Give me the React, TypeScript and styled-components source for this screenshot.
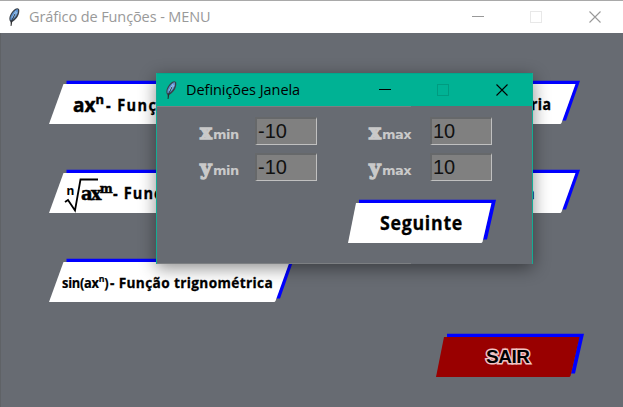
import React from 'react';
import styled, { createGlobalStyle } from 'styled-components';

const GlobalStyle = createGlobalStyle`
  * { box-sizing: border-box; }
  body { margin: 0; overflow: hidden; font-family: "Liberation Sans", Arial, sans-serif; }
`;

const Desktop = styled.div`
  position: relative;
  width: 623px;
  height: 407px;
  overflow: hidden;
  display: flex;
  flex-direction: column;
`;

const TitleBar = styled.header<{ $active?: boolean }>`
  display: flex;
  align-items: center;
  height: 33px;
  flex: none;
  padding-left: 7px;
  border-top: 1px solid ${p => (p.$active ? '#00a88c' : '#a9a9a9')};
  background: ${p => (p.$active ? '#00b294' : '#fff')};
  color: ${p => (p.$active ? '#000' : '#999')};
`;

const Title = styled.h1<{ $width: number; $spacing: number }>`
  flex: none;
  width: ${p => p.$width}px;
  margin: 0 auto 0 8px;
  font: 400 14.5px/20px "Open Sans", "Noto Sans", sans-serif;
  letter-spacing: ${p => p.$spacing}px;
  white-space: nowrap;
`;

const Controls = styled.div<{ $right: number }>`
  display: flex;
  gap: 46px;
  margin-right: ${p => p.$right}px;
  svg:last-child { margin-left: 1px; }
`;

const Surface = styled.main`
  flex: 1;
  padding: 47px 0 0 48px;
  background: #676b72;
  border-left: 1px solid #5f6266;
`;

const Menu = styled.nav`
  display: grid;
  grid-template-columns: 245px 245px;
  column-gap: 41px;
  grid-auto-rows: 45px;
  row-gap: 44px;
`;

const ExitRow = styled.div`
  display: flex;
  justify-content: flex-end;
  margin: 30px 39px 0 0;
`;

const SlantButton = styled.button<{ $w: number }>`
  position: relative;
  display: block;
  width: ${p => p.$w}px;
  height: 45px;
  padding: 0;
  border: 0;
  background: none;
  color: #000;
  text-align: left;
`;

const Backdrop = styled.svg`
  position: absolute;
  inset: 0;
  display: block;
`;

const Caption = styled.span<{ $indent: number }>`
  position: relative;
  display: flex;
  align-items: baseline;
  height: 45px;
  padding: 14px 0 0 ${p => p.$indent}px;
  white-space: nowrap;
`;

const Term = styled.span<{ $size: number; $spacing?: number; $w: number; $family?: string }>`
  flex: none;
  width: ${p => p.$w}px;
  font: 700 ${p => p.$size}px/22px ${p => p.$family ?? '"Liberation Sans"'}, sans-serif;
  letter-spacing: ${p => p.$spacing ?? 0}px;
`;

const NarrowTerm = styled(Term)`
  font-family: "Open Sans", sans-serif;
  transform: translateY(-1px) scaleX(0.91);
  transform-origin: 0 50%;
  -webkit-text-stroke: 0.3px #000;
`;

const FormulaTerm = styled(Term)`
  font-family: "Open Sans", sans-serif;
  transform: translateY(-1px) scaleX(0.92);
  transform-origin: 0 50%;
  -webkit-text-stroke: 0.2px #000;
`;

const Power = styled.sup`
  font-size: 0.68em;
  line-height: 0;
  vertical-align: 0.6em;
`;

const Radical = styled.svg`
  position: absolute;
  left: 14px;
  top: 4px;
`;

const ExitText = styled(Term)`
  transform: translateY(-1px);
  -webkit-text-stroke: 3px #f2c4c4;
  paint-order: stroke fill;
`;

const HeavyTerm = styled(Term)`
  -webkit-text-stroke: 0.5px #000;
`;

const Dialog = styled.section`
  position: absolute;
  left: 156px;
  top: 73px;
  width: 377px;
  height: 191px;
  display: flex;
  flex-direction: column;
  border: solid #14ac94;
  border-width: 0 1px;
  background: #676b72;
  box-shadow: 0 4px 16px rgba(0, 0, 0, 0.45);
`;

const Edge = styled.div`
  width: 254px;
  height: 1px;
  flex: none;
  background: #7c7f82;
`;

const Form = styled.div`
  flex: 1;
  padding: 10px 0 0 42px;
`;

const Fields = styled.div`
  display: grid;
  grid-template-columns: 56px 113px 62px 62px;
  grid-auto-rows: 28px;
  row-gap: 8px;
`;

const FieldName = styled.label`
  display: flex;
  align-items: baseline;
  padding-left: 1px;
  color: #c9c9c9;
  font: 700 13px/30px "DejaVu Sans", sans-serif;
  letter-spacing: -0.5px;
`;

const Axis = styled.b`
  width: 13px;
  font: 700 20px/30px "DejaVu Serif", serif;
  -webkit-text-stroke: 1.3px #c9c9c9;
`;

const Entry = styled.input`
  width: 62px;
  height: 28px;
  padding: 0 0 0 1px;
  border: solid;
  border-width: 2px 1px 1px 2px;
  border-color: #66686a #c0c0c0 #c0c0c0 #66686a;
  border-radius: 0;
  outline: 0;
  background: #808080;
  color: #111;
  font: 20px "Liberation Sans", Arial, sans-serif;
`;

const Submit = styled.div`
  margin: 18px 0 0 149px;
`;

const Feather = () => (
  <svg width="14" height="20" viewBox="0 0 14 20">
    <path d="M4 19L3.5 15C.5 11 4 5 8 2C10 .5 12.8 1 12.3 4C12.3 9 8.5 13 5 15Z" fill="#3a4048" />
    <path d="M3.5 13C2.5 9 7 3.5 10.5 2C12.5 5 8.5 11.5 4.5 13.5Z" fill="#5b91cf" />
    <path d="M5 11L9 4M7 10L10 5" stroke="#9cc4ec" />
    <path d="M4 19L5 13L8 7" stroke="#222" fill="none" strokeWidth=".8" />
  </svg>
);

const WindowControls = ({ ink, faint, right }: { ink: string; faint: string; right: number }) => (
  <Controls $right={right}>
    <svg width="12" height="12"><path d="M0 5.5H12" stroke={ink} /></svg>
    <svg width="12" height="12"><rect x=".5" y=".5" width="11" height="11" fill="none" stroke={faint} /></svg>
    <svg width="12" height="12"><path d="M.5.5L11.5 11.5M11.5.5L.5 11.5" stroke={ink} strokeWidth="1.1" /></svg>
  </Controls>
);

type SlantedProps = { small?: boolean; fill?: string; indent: number; children: React.ReactNode };
const Slanted = ({ small, fill = '#fff', indent, children }: SlantedProps) => {
  const w = small ? 148 : 245;
  const slope = small ? 8 : 14.5;
  const tip = small ? 139 : 231;
  return (
    <SlantButton $w={w}>
      <Backdrop width={w} height="45">
        <path d={`M${slope + 3} .7H${w}L${tip} 40.5H${tip - 4}L${w - 5} 4.5H${slope + 3}Z`} fill="#00f" />
        <path d={`M${slope} 4H${w - 4.5}L${tip - 4.5} 43L${tip - 5.5} 44H0Z`} fill={fill} />
      </Backdrop>
      <Caption $indent={indent}>{children}</Caption>
    </SlantButton>
  );
};

const Field = ({ axis, bound, value }: { axis: string; bound: string; value: string }) => (
  <>
    <FieldName><Axis>{axis}</Axis>{bound}</FieldName>
    <Entry defaultValue={value} />
  </>
);

export default function App() {
  return (
    <Desktop>
      <GlobalStyle />
      <TitleBar>
        <Feather />
        <Title $width={190} $spacing={-0.1}>Gráfico de Funções - MENU</Title>
        <WindowControls ink="#999" faint="#e8e8e8" right={22} />
      </TitleBar>
      <Surface>
        <Menu>
          <Slanted indent={24}>
            <HeavyTerm $size={19} $w={33} $family='"Open Sans"'>ax<Power>n</Power></HeavyTerm>
            <NarrowTerm $size={16} $w={100} $spacing={1.5}>- Função</NarrowTerm>
          </Slanted>
          <Slanted indent={196}><NarrowTerm $size={15.5} $w={30} $spacing={0.4}>ria</NarrowTerm></Slanted>
          <Slanted indent={32}>
            <Radical width="40" height="40">
              <path d="M2 29L5 27L12 37.5L17.5 6.5H35" fill="none" stroke="#000" strokeWidth="1.8" />
              <text x="3.5" y="22" fontFamily="Noto Sans" fontWeight="700" fontSize="12">n</text>
            </Radical>
            <HeavyTerm $size={18} $w={32} $family='"DejaVu Serif"' $spacing={-1.8}>ax<Power>m</Power></HeavyTerm>
            <NarrowTerm $size={16} $w={100} $spacing={1.2}>- Função</NarrowTerm>
          </Slanted>
          <Slanted indent={191}><NarrowTerm $size={15.5} $w={20}>a</NarrowTerm></Slanted>
          <Slanted indent={13}>
            <FormulaTerm $size={14} $w={48} $spacing={-0.3}>sin(ax<Power>n</Power>)</FormulaTerm>
            <NarrowTerm $size={15} $w={170} $spacing={0.4}>- Função trignométrica</NarrowTerm>
          </Slanted>
        </Menu>
        <ExitRow>
          <Slanted small fill="#900" indent={50}>
            <ExitText $size={19} $w={50} $spacing={-0.5}>SAIR</ExitText>
          </Slanted>
        </ExitRow>
      </Surface>
      <Dialog>
        <TitleBar $active>
          <Feather />
          <Title $width={120} $spacing={-0.05}>Definições Janela</Title>
          <WindowControls ink="#000" faint="#009b80" right={24} />
        </TitleBar>
        <Edge />
        <Form>
          <Fields>
            <Field axis="x" bound="min" value="-10" />
            <Field axis="x" bound="max" value="10" />
            <Field axis="y" bound="min" value="-10" />
            <Field axis="y" bound="max" value="10" />
          </Fields>
          <Submit>
            <Slanted small indent={32}><NarrowTerm $size={19.5} $w={84} $spacing={0.8}>Seguinte</NarrowTerm></Slanted>
          </Submit>
        </Form>
        <Edge />
      </Dialog>
    </Desktop>
  );
}
